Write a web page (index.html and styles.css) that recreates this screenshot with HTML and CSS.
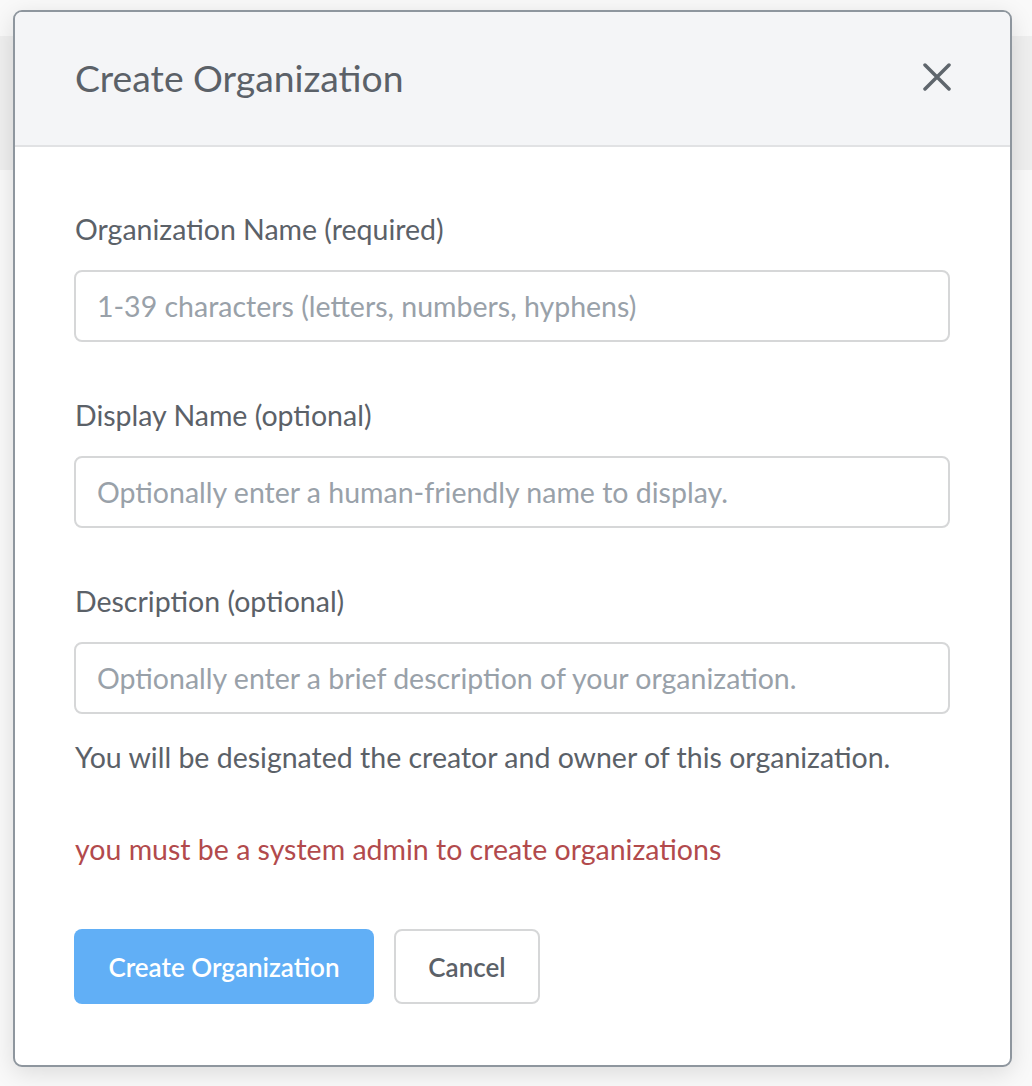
FILE: index.html
```html
<!DOCTYPE html>
<html lang="en">
<head>
<meta charset="utf-8">
<title>Create Organization</title>
<link rel="stylesheet" href="styles.css">
</head>
<body>
<div class="page">
  <div class="page-bar"></div>
</div>
<div class="modal" role="dialog" aria-labelledby="modal-title">
  <div class="modal-header">
    <h1 class="modal-title" id="modal-title">Create Organization</h1>
    <button class="close" type="button" aria-label="Close">
      <svg width="28" height="28" viewBox="0 0 28 28" aria-hidden="true">
        <path d="M2 2 L26 26 M26 2 L2 26" stroke="#5f666d" stroke-width="3.5" stroke-linecap="round" fill="none"/>
      </svg>
    </button>
  </div>
  <form class="modal-body">
    <label class="field-label" for="org-name">Organization Name (required)</label>
    <input class="field-input" id="org-name" type="text" placeholder="1-39 characters (letters, numbers, hyphens)">
    <label class="field-label" for="display-name">Display Name (optional)</label>
    <input class="field-input" id="display-name" type="text" placeholder="Optionally enter a human-friendly name to display.">
    <label class="field-label" for="description">Description (optional)</label>
    <input class="field-input field-last" id="description" type="text" placeholder="Optionally enter a brief description of your organization.">
    <p class="note">You will be designated the creator and owner of this organization.</p>
    <p class="error">you must be a system admin to create organizations</p>
    <div class="actions">
      <button class="btn btn-primary" type="button">Create Organization</button>
      <button class="btn btn-default" type="button">Cancel</button>
    </div>
  </form>
</div>
</body>
</html>
```

FILE: styles.css
```css
* { box-sizing: border-box; }

html, body {
  margin: 0;
  padding: 0;
}

body {
  width: 1032px;
  height: 1086px;
  background: #f9f9f9;
  font-family: "Lato", "Liberation Sans", sans-serif;
  color: #5b6168;
  overflow: hidden;
  position: relative;
}

.page {
  padding-top: 36px;
}

.page-bar {
  height: 134px;
  background: #efefef;
}

.modal {
  position: absolute;
  left: 13px;
  top: 10px;
  width: 999px;
  height: 1057px;
  background: #fff;
  border: 2px solid #8e969e;
  border-radius: 9px;
  box-shadow: 0 6px 24px rgba(0, 0, 0, 0.12);
  overflow: hidden;
}

.modal-header {
  height: 135px;
  background: #f4f5f7;
  border-bottom: 2px solid #e1e2e4;
  display: flex;
  align-items: center;
  justify-content: space-between;
  padding: 0 59px 0 60px;
}

.modal-title {
  margin: 0 0 2px;
  font-size: 37.3px;
  font-weight: 400;
  color: #5b6168;
}

.close {
  border: 0;
  background: none;
  padding: 0;
  width: 28px;
  height: 28px;
  display: flex;
  margin-bottom: 4px;
}

.modal-body {
  display: flex;
  flex-direction: column;
  align-items: flex-start;
  padding: 64px 61px 0 59px;
  margin: 0;
}

.field-label {
  font-size: 28.5px;
  line-height: 36px;
  height: 36px;
  margin-bottom: 23px;
  margin-left: 1px;
}

.field-input {
  width: 876px;
  height: 72px;
  border: 2px solid #d6d7d8;
  border-radius: 8px;
  padding: 0 21px;
  font-family: inherit;
  font-size: 28.5px;
  color: #5b6168;
  background: #fff;
  margin-bottom: 55px;
}

.field-input::placeholder {
  color: #99a1a9;
}

.field-last {
  margin-bottom: 25px;
}

.note {
  margin: 0 0 56px 1px;
  font-size: 28.5px;
  line-height: 36px;
}

.error {
  margin: 0 0 62px 1px;
  font-size: 28.5px;
  line-height: 36px;
  color: #b24a4c;
}

.actions {
  display: flex;
  gap: 20px;
}

.btn {
  height: 75px;
  border-radius: 8px;
  font-family: inherit;
  font-size: 26px;
  font-weight: 600;
  padding: 0;
  white-space: nowrap;
  display: flex;
  align-items: center;
  justify-content: center;
}

.btn-primary {
  width: 300px;
  background: #61aff6;
  border: 0;
  color: #fff;
}

.btn-default {
  width: 146px;
  background: #fff;
  border: 2px solid #d6d7d8;
  color: #5b6168;
}
```
